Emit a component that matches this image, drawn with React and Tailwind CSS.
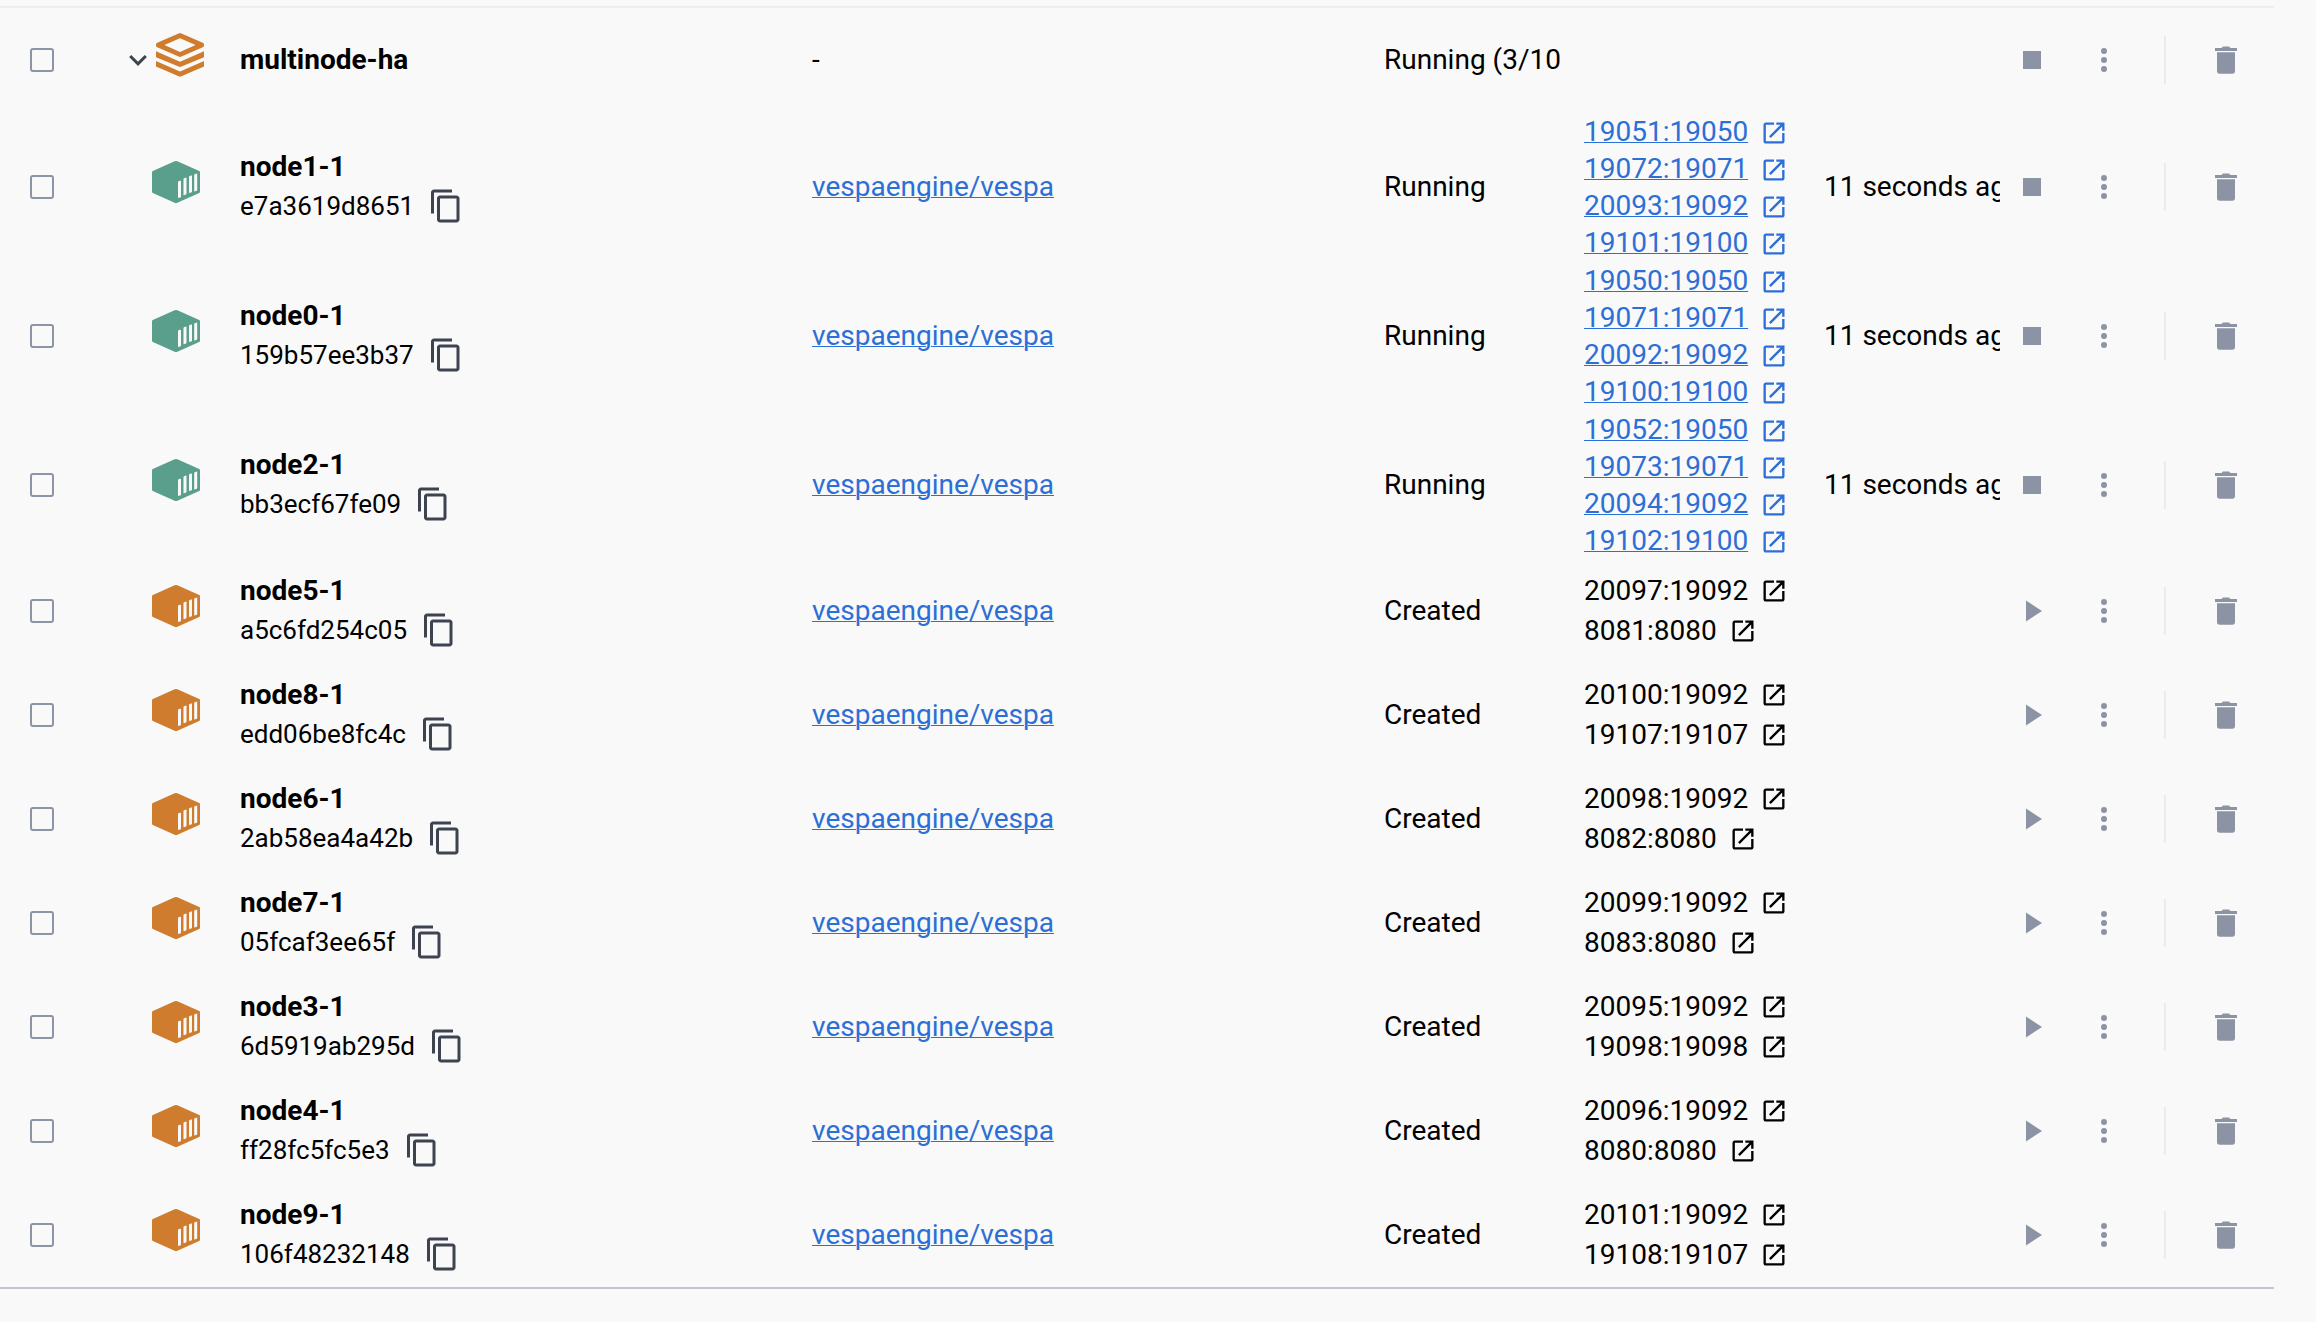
const containers = [
  { name: "node1-1", id: "e7a3619d8651", running: true, ports: ["19051:19050", "19072:19071", "20093:19092", "19101:19100"] },
  { name: "node0-1", id: "159b57ee3b37", running: true, ports: ["19050:19050", "19071:19071", "20092:19092", "19100:19100"] },
  { name: "node2-1", id: "bb3ecf67fe09", running: true, ports: ["19052:19050", "19073:19071", "20094:19092", "19102:19100"] },
  { name: "node5-1", id: "a5c6fd254c05", running: false, ports: ["20097:19092", "8081:8080"] },
  { name: "node8-1", id: "edd06be8fc4c", running: false, ports: ["20100:19092", "19107:19107"] },
  { name: "node6-1", id: "2ab58ea4a42b", running: false, ports: ["20098:19092", "8082:8080"] },
  { name: "node7-1", id: "05fcaf3ee65f", running: false, ports: ["20099:19092", "8083:8080"] },
  { name: "node3-1", id: "6d5919ab295d", running: false, ports: ["20095:19092", "19098:19098"] },
  { name: "node4-1", id: "ff28fc5fc5e3", running: false, ports: ["20096:19092", "8080:8080"] },
  { name: "node9-1", id: "106f48232148", running: false, ports: ["20101:19092", "19108:19107"] },
];

function StackIcon() {
  return (
    <svg width="48" height="44" viewBox="0 0 48 44" fill="#d07c2e" className="mb-2.5 shrink-0" aria-hidden="true">
      <path fillRule="evenodd" d="M22.6.4Q24-.2 25.400.4L46.800 9.800Q48 10.400 48 11.400V13Q48 13.600 46.800 14.200L25.400 23.600Q24 24.200 22.600 23.600L1.200 14.200Q0 13.600 0 13V11.400Q0 10.400 1.200 9.800ZM24 5.200 8.400 12 24 18.900 39.600 12Z" />
      <path d="M0 18.300 24 28.700 48 18.300V24.200L25.400 33.600Q24 34.200 22.600 33.600L0 24.200Z" />
      <path d="M0 28 24 38.400 48 28V33.600L25.400 43.200Q24 43.800 22.600 43.200L0 33.600Z" />
    </svg>
  );
}

function ContainerIcon({ running }) {
  return (
    <svg width="48" height="42" viewBox="0 0 48 42" className="mb-2.5 shrink-0" aria-hidden="true">
      <path
        fill={running ? "#5a9f8c" : "#d07c2e"}
        d="M22.600.3Q24-.2 25.400.3L47.200 10Q48 10.400 48 11.200V30.800Q48 31.600 47.200 32L25.400 41.700Q24 42.200 22.600 41.700L.8 32Q0 31.600 0 30.800V11.200Q0 10.400.8 10Z"
      />
      <g fill="#f9f9f9">
        <path d="M26 21.200Q26 20.400 27 20L29 19.700V35.400Q29 36.200 28 36.600L26 37Z" />
        <path d="M31.500 18Q31.500 17.200 32.500 16.900L34.500 16.600V32.600Q34.500 33.400 33.500 33.800L31.500 34.300Z" />
        <path d="M37 15.900Q37 15.100 38 14.800L40 14.500V30.500Q40 31.300 39 31.600L37 32.100Z" />
        <path d="M42.200 14Q42.200 13.200 43.200 12.900L45.200 12.600V28.800Q45.200 29.600 44.200 29.900L42.200 30.400Z" />
      </g>
    </svg>
  );
}

function CopyIcon() {
  return (
    <svg width="36" height="36" viewBox="0 0 24 24" fill="#3d434f" aria-hidden="true">
      <path d="M16 1H4c-1.100 0-2 .9-2 2v14h2V3h12V1zm3 4H8c-1.100 0-2 .9-2 2v14c0 1.100.9 2 2 2h11c1.100 0 2-.9 2-2V7c0-1.100-.9-2-2-2zm0 16H8V7h11v14z" />
    </svg>
  );
}

function OpenIcon({ className }) {
  return (
    <svg width="28" height="28" viewBox="0 0 24 24" fill="currentColor" className={className} aria-hidden="true">
      <path d="M19 19H5V5h7V3H5c-1.110 0-2 .9-2 2v14c0 1.100.89 2 2 2h14c1.100 0 2-.9 2-2v-7h-2v7zM14 3v2h3.590l-9.830 9.830 1.410 1.410L19 6.410V10h2V3h-7z" />
    </svg>
  );
}

function Check({ label }) {
  return (
    <input
      type="checkbox"
      aria-label={label}
      className="ml-[30px] block size-6 appearance-none rounded-[3px] border-2 border-[#8c94a5] checked:bg-[#2c6fd6]"
    />
  );
}

function IconButton({ label, children }) {
  return (
    <button type="button" aria-label={label} className="flex h-12 w-14 items-center justify-center text-[#8c93a4]">
      {children}
    </button>
  );
}

function Actions({ running, name }) {
  return (
    <div className="flex items-center">
      <IconButton label={(running ? "Stop " : "Start ") + name}>
        <svg width="24" height="24" viewBox="0 0 24 24" fill="currentColor" aria-hidden="true">
          {running ? <path d="M3 3h18v18H3z" /> : <path d="M6 1.500 22 12 6 22.500z" />}
        </svg>
      </IconButton>
      <div className="ml-4">
        <IconButton label={"More actions for " + name}>
          <svg width="24" height="24" viewBox="0 0 24 24" fill="currentColor" aria-hidden="true">
            <circle cx="12" cy="3" r="3" />
            <circle cx="12" cy="12" r="3" />
            <circle cx="12" cy="21" r="3" />
          </svg>
        </IconButton>
      </div>
      <div className="mx-8 h-12 w-0.5 bg-[#ebebed]" />
      <IconButton label={"Delete " + name}>
        <svg width="22" height="28" viewBox="0 0 22 28" fill="currentColor" aria-hidden="true">
          <path d="M0 2h6.500l1.500-1.500h6L15.500 2H22v3H0zM2 6.300h18V25q0 2.700-2.700 2.700H4.700Q2 27.700 2 25z" />
        </svg>
      </IconButton>
    </div>
  );
}

const link = "text-[#2c6fd6] underline decoration-1 underline-offset-1";

function ContainerRow({ name, id, running, ports }) {
  return (
    <tr className={running ? "h-[149px]" : "h-[104px]"}>
      <td><Check label={"Select " + name} /></td>
      <td><div className="flex items-center pl-20"><ContainerIcon running={running} /></div></td>
      <td>
        <div className="font-bold leading-[38px]">{name}</div>
        <div className="flex h-10 items-center gap-3.5 text-[26px] leading-10">
          {id}
          <button type="button" aria-label={"Copy ID of " + name}><CopyIcon /></button>
        </div>
      </td>
      <td><a href="#image" className={link}>vespaengine/vespa</a></td>
      <td>{running ? "Running" : "Created"}</td>
      <td>
        <ul>
          {ports.map((port) => (
            <li key={port} className={running ? "h-[37px] leading-[37px]" : "h-10 leading-10"}>
              {running ? (
                <a href={"#" + port} className="flex items-center gap-3 text-[#2c6fd6]">
                  <span className={link}>{port}</span>
                  <OpenIcon className="mt-1" />
                </a>
              ) : (
                <span className="flex items-center gap-3">{port}<OpenIcon /></span>
              )}
            </li>
          ))}
        </ul>
      </td>
      <td className="pr-1">
        <div className="overflow-hidden whitespace-nowrap">{running && "11 seconds ago"}</div>
      </td>
      <td><Actions running={running} name={name} /></td>
    </tr>
  );
}

export default function App() {
  return (
    <main className="min-h-screen bg-[#f9f9f9] pt-1.5 pr-[42px] font-['Roboto',sans-serif] text-[28px] leading-10 text-black">
      <table className="w-full table-fixed border-separate border-spacing-0 border-t-2 border-b-2 border-t-[#eeeeef] border-b-[#c3c6d2] text-left">
        <colgroup>
          <col className="w-[72px]" />
          <col className="w-[168px]" />
          <col />
          <col />
          <col className="w-[200px]" />
          <col className="w-[240px]" />
          <col className="w-[180px]" />
          <col className="w-[270px]" />
        </colgroup>
        <tbody>
          <tr className="h-[104px]">
            <td><Check label="Select multinode-ha" /></td>
            <td>
              <div className="flex items-center gap-1.5 pl-[54px]">
                <button type="button" aria-label="Collapse multinode-ha">
                  <svg width="24" height="24" viewBox="0 0 24 24" fill="none" stroke="#3d434f" strokeWidth="3" aria-hidden="true">
                    <path d="M4.200 8 12 15.800 19.800 8" />
                  </svg>
                </button>
                <StackIcon />
              </div>
            </td>
            <td className="font-bold">multinode-ha</td>
            <td>-</td>
            <td className="pr-6"><div className="overflow-hidden whitespace-nowrap">Running (3/10)</div></td>
            <td />
            <td />
            <td><Actions running name="multinode-ha" /></td>
          </tr>
          {containers.map((container) => (
            <ContainerRow key={container.name} {...container} />
          ))}
        </tbody>
      </table>
    </main>
  );
}
